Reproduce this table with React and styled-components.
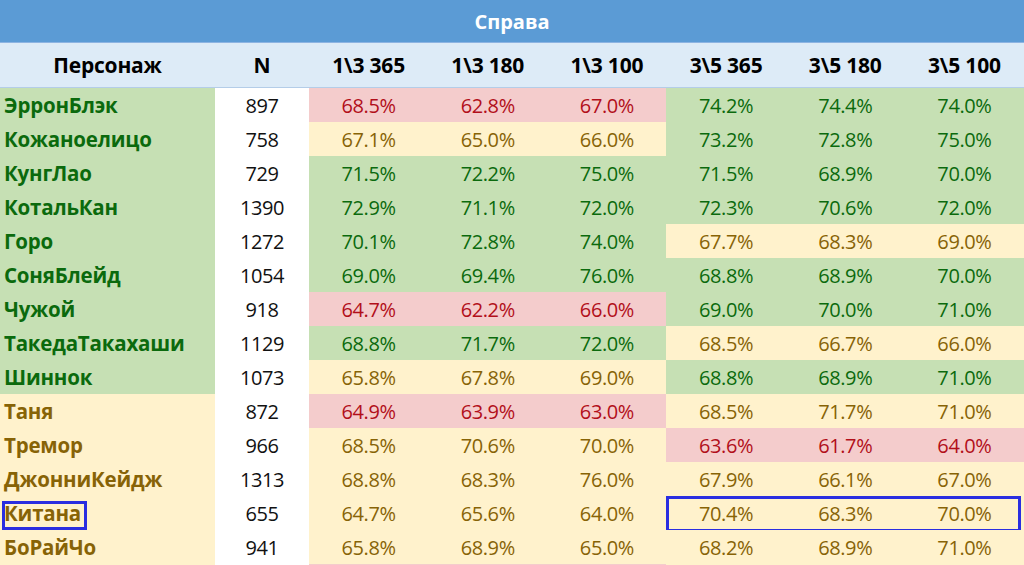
import React from "react";
import styled, { createGlobalStyle, css } from "styled-components";

const GlobalStyle = createGlobalStyle`
  html, body {
    margin: 0;
    padding: 0;
    background: #ffffff;
    overflow: hidden;
  }
  body {
    font-family: "Open Sans", "Liberation Sans", sans-serif;
  }
`;

const palette = {
  g: { bg: "#c6e0b4", fg: "#0b6a0d" },
  y: { bg: "#fff2cc", fg: "#876306" },
  r: { bg: "#f4cccc", fg: "#b20f1a" },
};

const Sheet = styled.div`
  width: 1024px;
  display: flex;
  flex-direction: column;
`;

const TitleBar = styled.div`
  height: 42px;
  background: #5b9bd5;
  border-bottom: 1px solid #8db4e2;
  display: flex;
  align-items: center;
  justify-content: center;
  color: #ffffff;
  font-weight: 700;
  font-size: 20px;
`;

const Row = styled.div`
  position: relative;
  display: grid;
  grid-template-columns: 215px 94px repeat(6, 1fr);
  height: ${(p) => (p.$head ? "44px" : "34px")};
  ${(p) =>
    p.$head &&
    css`
      background: #ddebf7;
      border-bottom: 1px solid #b4cde8;
    `}
`;

const HeadCell = styled.div`
  display: flex;
  align-items: center;
  justify-content: center;
  font-weight: 700;
  font-size: 21px;
  color: #000000;
  letter-spacing: -0.2px;
`;

const NameCell = styled.div`
  position: relative;
  display: flex;
  align-items: center;
  padding-left: 4px;
  font-weight: 700;
  font-size: 20.5px;
  letter-spacing: -0.2px;
  background: ${(p) => palette[p.$s].bg};
  color: ${(p) => palette[p.$s].fg};
  ${(p) =>
    p.$marked &&
    css`
      &::after {
        content: "";
        position: absolute;
        left: 2px;
        top: 5px;
        width: 85px;
        height: 29px;
        box-sizing: border-box;
        border: 3px solid #2a2ee0;
      }
    `}
`;

const CountCell = styled.div`
  display: flex;
  align-items: center;
  justify-content: center;
  background: #ffffff;
  color: #111111;
  font-size: 20px;
  letter-spacing: -0.4px;
`;

const ValueCell = styled.div`
  display: flex;
  align-items: center;
  justify-content: center;
  font-size: 20px;
  letter-spacing: -0.4px;
  background: ${(p) => palette[p.$s].bg};
  color: ${(p) => palette[p.$s].fg};
`;

const RowMark = styled.div`
  position: absolute;
  grid-column: 6 / 9;
  grid-row: 1;
  inset: 0 3px -2px 0;
  border: 3px solid #2a2ee0;
  pointer-events: none;
`;

const headers = ["1\\3 365", "1\\3 180", "1\\3 100", "3\\5 365", "3\\5 180", "3\\5 100"];

const rows = [
  ["ЭрронБлэк", "g", 897, ["r68.5", "r62.8", "r67.0", "g74.2", "g74.4", "g74.0"]],
  ["Кожаноелицо", "g", 758, ["y67.1", "y65.0", "y66.0", "g73.2", "g72.8", "g75.0"]],
  ["КунгЛао", "g", 729, ["g71.5", "g72.2", "g75.0", "g71.5", "g68.9", "g70.0"]],
  ["КотальКан", "g", 1390, ["g72.9", "g71.1", "g72.0", "g72.3", "g70.6", "g72.0"]],
  ["Горо", "g", 1272, ["g70.1", "g72.8", "g74.0", "y67.7", "y68.3", "y69.0"]],
  ["СоняБлейд", "g", 1054, ["g69.0", "g69.4", "g76.0", "g68.8", "g68.9", "g70.0"]],
  ["Чужой", "g", 918, ["r64.7", "r62.2", "r66.0", "g69.0", "g70.0", "g71.0"]],
  ["ТакедаТакахаши", "g", 1129, ["g68.8", "g71.7", "g72.0", "y68.5", "y66.7", "y66.0"]],
  ["Шиннок", "g", 1073, ["y65.8", "y67.8", "y69.0", "g68.8", "g68.9", "g71.0"]],
  ["Таня", "y", 872, ["r64.9", "r63.9", "r63.0", "y68.5", "y71.7", "y71.0"]],
  ["Тремор", "y", 966, ["y68.5", "y70.6", "y70.0", "r63.6", "r61.7", "r64.0"]],
  ["ДжонниКейдж", "y", 1313, ["y68.8", "y68.3", "y76.0", "y67.9", "y66.1", "y67.0"]],
  ["Китана", "y", 655, ["y64.7", "y65.6", "y64.0", "y70.4", "y68.3", "y70.0"], true],
  ["БоРайЧо", "y", 941, ["y65.8", "y68.9", "y65.0", "y68.2", "y68.9", "y71.0"]],
  ["", "y", "", ["r", "r", "r", "y", "y", "y"]],
];

export default function App() {
  return (
    <>
      <GlobalStyle />
      <Sheet>
        <TitleBar>Справа</TitleBar>
        <Row $head>
          <HeadCell>Персонаж</HeadCell>
          <HeadCell>N</HeadCell>
          {headers.map((h) => (
            <HeadCell key={h}>{h}</HeadCell>
          ))}
        </Row>
        {rows.map(([name, s, n, vals, marked], i) => (
          <Row key={i}>
            <NameCell $s={s} $marked={marked}>
              {name}
            </NameCell>
            <CountCell>{n}</CountCell>
            {vals.map((v, j) => (
              <ValueCell key={j} $s={v[0]}>
                {v.length > 1 ? `${v.slice(1)}%` : ""}
              </ValueCell>
            ))}
            {marked && <RowMark />}
          </Row>
        ))}
      </Sheet>
    </>
  );
}
